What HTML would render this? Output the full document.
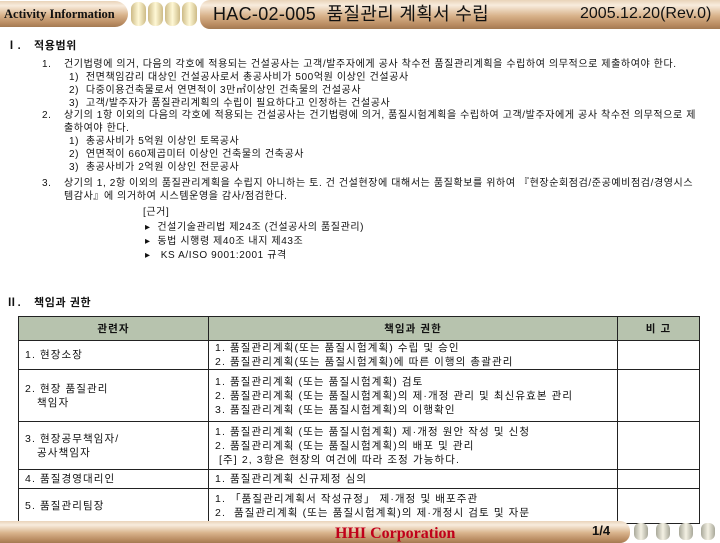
<!DOCTYPE html>
<html><head><meta charset="utf-8"><style>
body{margin:0;width:720px;height:540px;background:#fff;position:relative;overflow:hidden;font-family:"Liberation Sans","Noto Sans CJK KR",sans-serif;color:#111}
.a{position:absolute;white-space:nowrap;font-size:10px;line-height:12px;letter-spacing:0.6px}
.bar{position:absolute;background:linear-gradient(#e9d3b9 0%,#f8ecdd 18%,#d8b28a 55%,#b98c62 85%,#a47a52 100%)}
.dot{position:absolute;top:2px;width:15px;height:24px;border-radius:7px;background:linear-gradient(90deg,#cdbb86,#fff8d6 50%,#cdbb86)}
.fdot{position:absolute;top:523px;width:14px;height:17px;border-radius:6px;background:linear-gradient(90deg,#a9a99a,#f4f1e4 50%,#a9a99a)}
table{position:absolute;left:18px;top:316px;width:682px;border-collapse:collapse;font-size:10.5px;letter-spacing:1.1px}
td{border:1px solid #222;padding:0 0 0 6px;line-height:14px;vertical-align:middle;white-space:nowrap}
th{border:1px solid #222;background:#b7c3ae;font-weight:bold;height:21px;font-size:10.5px}
</style></head><body>
<div class="bar" style="left:0;top:1px;width:128px;height:26px;border-radius:0 13px 13px 0"></div>
<div class="a" style="left:4px;top:8px;font-family:'Liberation Serif',serif;font-weight:bold;font-size:12.5px;letter-spacing:0">Activity Information</div>
<div class="dot" style="left:131px"></div><div class="dot" style="left:148px"></div><div class="dot" style="left:165px"></div><div class="dot" style="left:182px"></div>
<div class="bar" style="left:200px;top:0;width:524px;height:29px;border-radius:10px 0 0 10px"></div>
<div class="a" style="left:213px;top:4px;font-size:18px;line-height:20px;letter-spacing:0.3px">HAC-02-005 &nbsp;품질관리 계획서 수립</div>
<div class="a" style="left:580px;top:4px;font-size:16px;line-height:20px;letter-spacing:0">2005.12.20(Rev.0)</div>

<div class="a" style="left:6px;top:40px;font-weight:bold;font-size:11px">Ⅰ.</div>
<div class="a" style="left:34px;top:40px;font-weight:bold;font-size:11px">적용범위</div>
<div class="a" style="left:42px;top:59px">1.</div><div class="a" style="left:64px;top:59px">건기법령에 의거, 다음의 각호에 적용되는 건설공사는 고객/발주자에게 공사 착수전 품질관리계획을 수립하여 의무적으로 제출하여야 한다.</div>
<div class="a" style="left:69px;top:72px">1)&nbsp; 전면책임감리 대상인 건설공사로서 총공사비가 500억원 이상인 건설공사</div>
<div class="a" style="left:69px;top:85px">2)&nbsp; 다중이용건축물로서 연면적이 3만㎡이상인 건축물의 건설공사</div>
<div class="a" style="left:69px;top:98px">3)&nbsp; 고객/발주자가 품질관리계획의 수립이 필요하다고 인정하는 건설공사</div>
<div class="a" style="left:42px;top:110px">2.</div><div class="a" style="left:64px;top:110px">상기의 1항 이외의 다음의 각호에 적용되는 건설공사는 건기법령에 의거, 품질시험계획을 수립하여 고객/발주자에게 공사 착수전 의무적으로 제</div>
<div class="a" style="left:64px;top:123px">출하여야 한다.</div>
<div class="a" style="left:69px;top:136px">1)&nbsp; 총공사비가 5억원 이상인 토목공사</div>
<div class="a" style="left:69px;top:149px">2)&nbsp; 연면적이 660제곱미터 이상인 건축물의 건축공사</div>
<div class="a" style="left:69px;top:162px">3)&nbsp; 총공사비가 2억원 이상인 전문공사</div>
<div class="a" style="left:42px;top:178px">3.</div><div class="a" style="left:64px;top:178px">상기의 1, 2항 이외의 품질관리계획을 수립지 아니하는 토. 건 건설현장에 대해서는 품질확보를 위하여 『현장순회점검/준공예비점검/경영시스</div>
<div class="a" style="left:64px;top:191px">템감사』에 의거하여 시스템운영을 감사/점검한다.</div>
<div class="a" style="left:143px;top:207px">[근거]</div>
<div class="a" style="left:145px;top:222px">▸&nbsp; 건설기술관리법 제24조 (건설공사의 품질관리)</div>
<div class="a" style="left:145px;top:236px">▸&nbsp; 동법 시행령 제40조 내지 제43조</div>
<div class="a" style="left:145px;top:250px">▸&nbsp;&nbsp; KS A/ISO 9001:2001 규격</div>

<div class="a" style="left:6px;top:297px;font-weight:bold;font-size:11px">Ⅱ.</div>
<div class="a" style="left:34px;top:297px;font-weight:bold;font-size:11px">책임과 권한</div>

<table>
<tr><th style="width:187px">관련자</th><th style="width:406px">책임과 권한</th><th>비 고</th></tr>
<tr style="height:28px"><td>1. 현장소장</td><td>1. 품질관리계획(또는 품질시험계획) 수립 및 승인<br>2. 품질관리계획(또는 품질시험계획)에 따른 이행의 총괄관리</td><td></td></tr>
<tr style="height:52px"><td>2. 현장 품질관리<br>&nbsp;&nbsp; 책임자</td><td>1. 품질관리계획 (또는 품질시험계획) 검토<br>2. 품질관리계획 (또는 품질시험계획)의 제·개정 관리 및 최신유효본 관리<br>3. 품질관리계획 (또는 품질시험계획)의 이행확인</td><td></td></tr>
<tr style="height:48px"><td>3. 현장공무책임자/<br>&nbsp;&nbsp; 공사책임자</td><td>1. 품질관리계획 (또는 품질시험계획) 제·개정 원안 작성 및 신청<br>2. 품질관리계획 (또는 품질시험계획)의 배포 및 관리<br>&nbsp;[주] 2, 3항은 현장의 여건에 따라 조정 가능하다.</td><td></td></tr>
<tr style="height:19px"><td>4. 품질경영대리인</td><td>1. 품질관리계획 신규제정 심의</td><td></td></tr>
<tr style="height:35px"><td>5. 품질관리팀장</td><td>1. 「품질관리계획서 작성규정」 제·개정 및 배포주관<br>2.&nbsp; 품질관리계획 (또는 품질시험계획)의 제·개정시 검토 및 자문</td><td></td></tr>
</table>

<div class="bar" style="left:-10px;top:521px;width:640px;height:22px;border-radius:0 10px 10px 0"></div>
<div class="a" style="left:335px;top:525px;font-family:'Liberation Serif',serif;font-weight:bold;font-size:16px;line-height:18px;color:#c0001a;letter-spacing:0">HHI Corporation</div>
<div class="a" style="left:592px;top:523px;font-weight:bold;font-size:13px;line-height:16px;letter-spacing:0">1/4</div>
<div class="fdot" style="left:634px"></div><div class="fdot" style="left:656px"></div><div class="fdot" style="left:679px"></div><div class="fdot" style="left:701px"></div>
</body></html>
